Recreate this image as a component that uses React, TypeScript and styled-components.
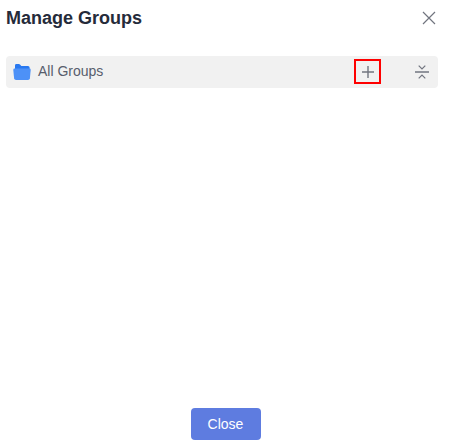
import React from "react";
import styled, { createGlobalStyle } from "styled-components";

const GlobalStyle = createGlobalStyle`
  *, *::before, *::after { box-sizing: border-box; }
  body {
    margin: 0;
    background: #fff;
    font-family: "Liberation Sans", Arial, sans-serif;
    overflow: hidden;
  }
  svg { display: block; }
`;

const Dialog = styled.section`
  display: flex;
  flex-direction: column;
  width: 451px;
  height: 448px;
  background: #fff;
`;

const Header = styled.header`
  display: flex;
  align-items: center;
  justify-content: space-between;
  height: 36px;
  padding: 0 15px 0 6px;
`;

const Title = styled.h1`
  margin: 0;
  font-size: 18px;
  line-height: 24px;
  font-weight: 700;
  color: #252b3a;
`;

const IconButton = styled.button`
  display: flex;
  padding: 0;
  border: 0;
  background: none;
  color: #71757f;
  cursor: pointer;
`;

const AddButton = styled(IconButton)`
  align-items: center;
  justify-content: center;
  width: 27px;
  height: 25px;
  margin: 0 34px 1px auto;
  padding: 1px 0 0 1px;
  border: 2px solid #fe0000;
`;

const Content = styled.main`
  flex: 1;
  padding: 20px 13px 0 6px;
`;

const GroupRow = styled.div`
  display: flex;
  align-items: center;
  height: 32px;
  padding: 0 9px 0 7px;
  border-radius: 4px;
  background: #f1f1f1;
`;

const GroupName = styled.span`
  margin: 0 0 2px 7px;
  font-size: 14px;
  line-height: 20px;
  color: #575d6c;
`;

const Footer = styled.footer`
  display: flex;
  justify-content: center;
  height: 40px;
`;

const CloseButton = styled.button`
  width: 70px;
  height: 32px;
  padding: 0;
  border: 0;
  border-radius: 4px;
  background: #5e7ce0;
  color: #fff;
  font: 14px "Liberation Sans", Arial, sans-serif;
  cursor: pointer;
`;

const CrossIcon = () => (
  <svg width="14" height="14" viewBox="0 0 14 14" fill="none" stroke="currentColor" strokeWidth="1.2">
    <path d="M1 1 13 13M13 1 1 13" />
  </svg>
);

const FolderIcon = () => (
  <svg width="18" height="16" viewBox="0 0 18 16">
    <path d="M2 9V1.4Q2 0 3.4 0h2.4q.7 0 1.2.6L8.3 2H15q1.6 0 1.6 1.6V9z" fill="#2878f0" />
    <path d="M1.6 4.6h14.8q1.4 0 1.3 1.4l-.8 8.3Q16.7 16 15 16H3q-1.7 0-1.9-1.7L.3 6q-.1-1.4 1.3-1.4z" fill="#4d91f7" />
  </svg>
);

const PlusIcon = () => (
  <svg width="12" height="12" viewBox="0 0 12 12" fill="none" stroke="currentColor" strokeWidth="1.4">
    <path d="M0 6h12M6 0v12" />
  </svg>
);

const CollapseIcon = () => (
  <svg width="14" height="14" viewBox="0 0 14 14" fill="none" stroke="currentColor" strokeWidth="1.2">
    <path d="M0 7h14" strokeWidth="1.5" />
    <path d="M3.7.6 7 3.9 10.3.6M3.7 13.4 7 10.1l3.3 3.3" />
  </svg>
);

export default function App() {
  return (
    <>
      <GlobalStyle />
      <Dialog role="dialog" aria-label="Manage Groups">
        <Header>
          <Title>Manage Groups</Title>
          <IconButton aria-label="Dismiss"><CrossIcon /></IconButton>
        </Header>
        <Content>
          <GroupRow>
            <FolderIcon />
            <GroupName>All Groups</GroupName>
            <AddButton aria-label="Add group"><PlusIcon /></AddButton>
            <IconButton aria-label="Collapse all"><CollapseIcon /></IconButton>
          </GroupRow>
        </Content>
        <Footer>
          <CloseButton>Close</CloseButton>
        </Footer>
      </Dialog>
    </>
  );
}
